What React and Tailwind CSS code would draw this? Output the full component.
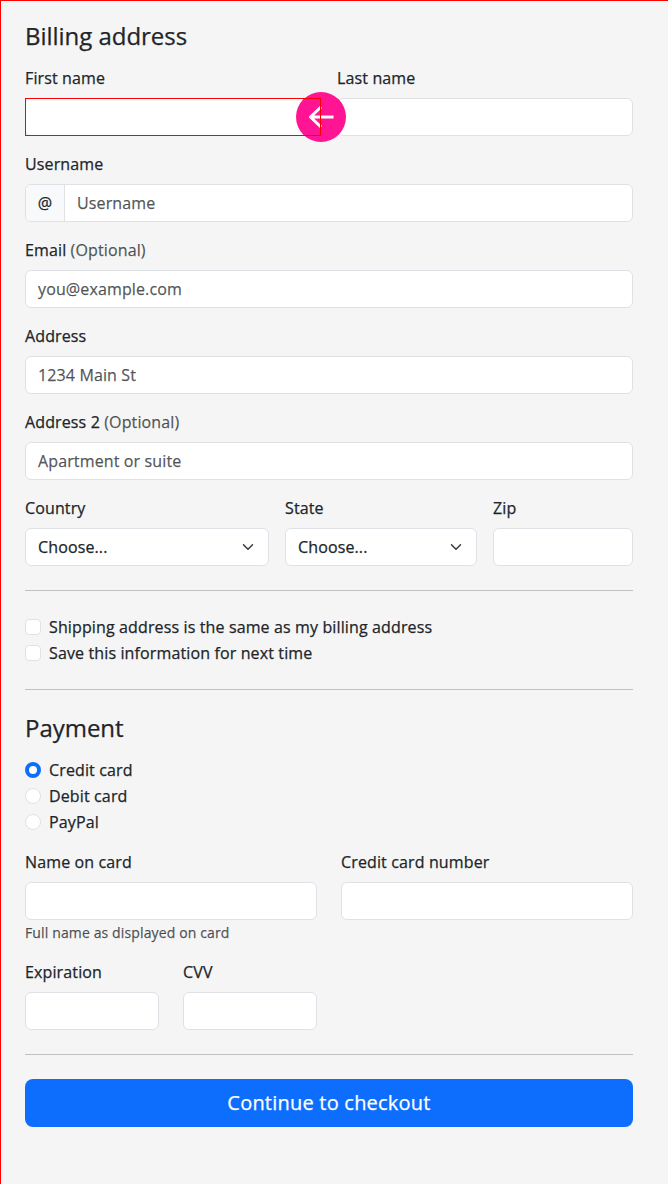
function Label({ children, optional }) {
  return (
    <label className="mb-2 block leading-6">
      {children}
      {optional && <span className="text-[#212529]/75"> (Optional)</span>}
    </label>
  );
}

function Field({ label, optional, placeholder, className = '' }) {
  return (
    <div className={className}>
      <Label optional={optional}>{label}</Label>
      <input
        placeholder={placeholder}
        className="block h-[38px] w-full rounded-md border border-[#dee2e6] bg-white px-3 placeholder:text-[#212529]/75 placeholder:opacity-100"
      />
    </div>
  );
}

function SelectField({ label, className }) {
  return (
    <div className={className}>
      <Label>{label}</Label>
      <div className="flex h-[38px] items-center justify-between rounded-md border border-[#dee2e6] bg-white pr-3 pl-3">
        <span>Choose...</span>
        <svg viewBox="0 0 16 16" className="h-3 w-4" fill="none" stroke="#343a40" strokeWidth="2" strokeLinecap="round" strokeLinejoin="round">
          <path d="m2 5 6 6 6-6" />
        </svg>
      </div>
    </div>
  );
}

function Choice({ label, radio, checked }) {
  const shape = radio ? 'rounded-full' : 'rounded-[4px]';
  const state = checked ? 'border-4 border-[#0d6efd] bg-white' : 'border border-[#dee2e6] bg-white';
  return (
    <div className="mb-0.5 flex h-6 items-center gap-2">
      <span className={`${shape} ${state} h-4 w-4`} />
      <span>{label}</span>
    </div>
  );
}

function Rule() {
  return <hr className="my-6 border-t border-[#212529]/25" />;
}

export default function App() {
  return (
    <main className="h-[1184px] border-t border-l border-[#ff0000] bg-[#f5f5f5] pt-5 pr-[35px] pl-6 font-['Open_Sans',sans-serif] text-base font-medium tracking-[0.13px] text-[#212529] [-webkit-text-stroke:0.25px]">
      <h4 className="mb-4 text-2xl leading-[29px] font-medium tracking-[-0.03px]">Billing address</h4>
      <div className="flex flex-col gap-4">
        <div className="flex">
          <div className="relative w-[296px]">
            <Field label="First name" />
            <div className="absolute top-[26px] -right-[25px] z-10 flex h-[50px] w-[50px] items-center justify-center rounded-full bg-[#ff1493]">
              <svg viewBox="0 0 26 26" className="h-[26px] w-[26px]" fill="none" stroke="white" strokeWidth="3" strokeLinejoin="round">
                <path d="M25.5 13H2M13 3 2.5 13 13 23" />
              </svg>
            </div>
            <div className="pointer-events-none absolute bottom-0 left-0 z-20 h-[38px] w-[296px] border border-[#ff0000]" />
          </div>
          <Field label="Last name" className="ml-4 w-[296px]" />
        </div>
        <div>
          <Label>Username</Label>
          <div className="flex h-[38px] overflow-hidden rounded-md border border-[#dee2e6] bg-white">
            <span className="flex w-[39px] items-center justify-center border-r border-[#dee2e6] bg-[#f8f9fa]">@</span>
            <input placeholder="Username" className="flex-1 px-3 placeholder:text-[#212529]/75 placeholder:opacity-100" />
          </div>
        </div>
        <Field label="Email" optional placeholder="you@example.com" />
        <Field label="Address" placeholder="1234 Main St" />
        <Field label="Address 2" optional placeholder="Apartment or suite" />
        <div className="flex gap-4">
          <SelectField label="Country" className="w-[244px]" />
          <SelectField label="State" className="w-48" />
          <Field label="Zip" className="w-[140px]" />
        </div>
      </div>
      <Rule />
      <Choice label="Shipping address is the same as my billing address" />
      <Choice label="Save this information for next time" />
      <Rule />
      <h4 className="-mt-px mb-4 text-2xl leading-[29px] font-medium tracking-[-0.03px]">Payment</h4>
      <div className="mb-4">
        <Choice radio checked label="Credit card" />
        <Choice radio label="Debit card" />
        <Choice radio label="PayPal" />
      </div>
      <div className="flex gap-6">
        <div className="w-[292px]">
          <Field label="Name on card" />
          <small className="mt-0.5 mb-px block text-sm leading-[21px] font-medium text-[#212529]/75">Full name as displayed on card</small>
        </div>
        <Field label="Credit card number" className="w-[292px]" />
      </div>
      <div className="mt-4 flex gap-6">
        <Field label="Expiration" className="w-[134px]" />
        <Field label="CVV" className="w-[134px]" />
      </div>
      <Rule />
      <button className="h-12 w-full rounded-lg bg-[#0d6efd] text-xl font-medium tracking-[0.22px] text-white">Continue to checkout</button>
    </main>
  );
}
